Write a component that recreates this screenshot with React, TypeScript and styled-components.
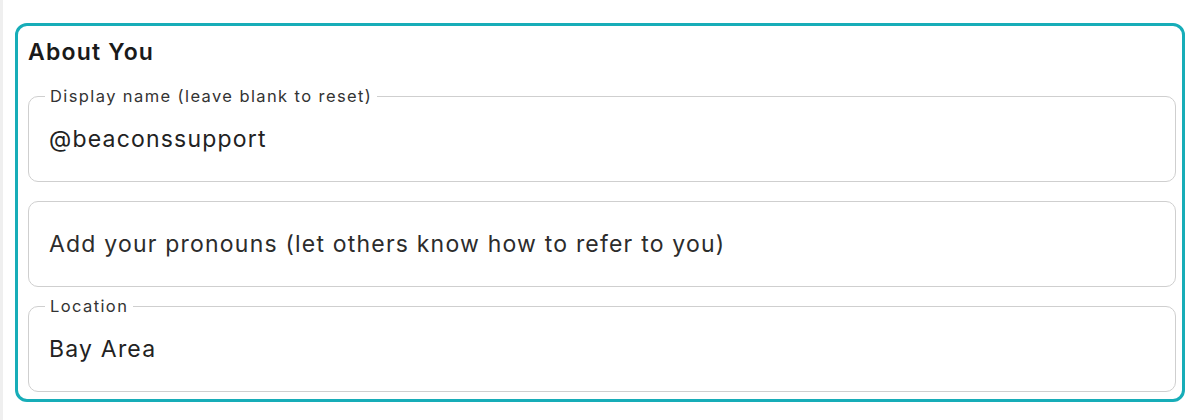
import React from 'react';
import styled, { createGlobalStyle } from 'styled-components';

const GlobalStyle = createGlobalStyle`
  html, body {
    margin: 0;
    padding: 0;
    background: #ffffff;
  }
  body {
    font-family: Inter, "Noto Sans", "Liberation Sans", sans-serif;
    color: #1c1c1c;
  }
`;

type FieldProps = {
  label?: string;
  value?: string;
  placeholder?: string;
};

function Field({ label, value, placeholder }: FieldProps) {
  return (
    <FieldBox>
      <Input defaultValue={value} placeholder={placeholder} aria-label={label || placeholder} />
      <Outline aria-hidden $notched={!!label}>
        {label ? <Legend>{label}</Legend> : null}
      </Outline>
    </FieldBox>
  );
}

export default function App() {
  return (
    <Page>
      <GlobalStyle />
      <Card>
        <Heading>About You</Heading>
        <Fields>
          <Field label="Display name (leave blank to reset)" value="@beaconssupport" />
          <Field placeholder="Add your pronouns (let others know how to refer to you)" />
          <Field label="Location" value="Bay Area" />
        </Fields>
      </Card>
    </Page>
  );
}

const Page = styled.div`
  min-height: 420px;
  box-sizing: border-box;
  border-left: 3px solid #efefef;
  padding: 23px 15px 0 12px;
`;

const Card = styled.section`
  border: 3px solid #17adb8;
  border-radius: 12px;
  padding: 10px 6px 7px 10px;
  background: #ffffff;
`;

const Heading = styled.h2`
  margin: 0;
  font-size: 23px;
  line-height: 33px;
  font-weight: 600;
  letter-spacing: 1.2px;
  color: #1a1a1a;
`;

const Fields = styled.div`
  display: flex;
  flex-direction: column;
  gap: 19px;
  margin-top: 27px;
`;

const FieldBox = styled.div`
  position: relative;
  height: 86px;
  display: flex;
  align-items: center;
  padding: 0 21px;
`;

const Input = styled.input`
  flex: 1;
  border: none;
  outline: none;
  background: transparent;
  padding: 0;
  font-family: inherit;
  font-size: 23px;
  line-height: 30px;
  letter-spacing: 1.2px;
  color: #222222;

  &::placeholder {
    color: #2c2c2c;
    opacity: 1;
  }
`;

const Outline = styled.fieldset<{ $notched: boolean }>`
  position: absolute;
  inset: ${(p) => (p.$notched ? '-8px 0 0 0' : '0')};
  margin: 0;
  padding: 0 16px;
  border: 1px solid #cfcfcf;
  border-radius: 10px;
  pointer-events: none;
`;

const Legend = styled.legend`
  padding: 0 5px;
  font-size: 16.5px;
  line-height: 16px;
  letter-spacing: 1.4px;
  color: #333333;
`;
